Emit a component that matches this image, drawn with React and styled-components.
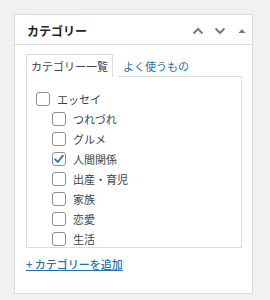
import React from "react";
import styled, { createGlobalStyle } from "styled-components";

const GlobalStyle = createGlobalStyle`
  html, body {
    margin: 0;
    padding: 0;
    background: #f1f1f1;
    font-family: "Noto Sans CJK JP", "Noto Sans", sans-serif;
  }
`;

const Page = styled.div`
  padding: 14px 0 0 14px;
`;

const Panel = styled.section`
  width: 237px;
  background: #fff;
  border: 1px solid #dcdcde;
  box-shadow: 0 1px 1px rgba(0, 0, 0, 0.04);
`;

const Header = styled.div`
  height: 30px;
  box-sizing: border-box;
  border-bottom: 1px solid #dcdcde;
  display: flex;
  align-items: center;
  padding: 2px 6px 0 12px;
  > h2 {
    margin: 0;
    flex: 1;
    font-size: 12px;
    font-weight: 700;
    color: #1d2327;
    line-height: 1;
  }
`;

const Handles = styled.div`
  display: flex;
  align-items: center;
  color: #787c82;
  > svg {
    display: block;
    margin-left: 10px;
  }
  > svg:last-child {
    margin-left: 12px;
  }
`;

const Body = styled.div`
  padding: 9px 10px 19px 11px;
`;

const TabRow = styled.div`
  display: flex;
  align-items: stretch;
  height: 23px;
`;

const Tab = styled.div`
  font-size: 11px;
  line-height: 1;
  display: flex;
  align-items: center;
  padding: ${(p) => (p.$active ? "1px 4px 0" : "1px 5px 0")};
  color: ${(p) => (p.$active ? "#3c434a" : "#2271b1")};
  border: 1px solid ${(p) => (p.$active ? "#dcdcde" : "transparent")};
  border-bottom: ${(p) => (p.$active ? "none" : "1px solid #dcdcde")};
  margin-right: ${(p) => (p.$active ? "4px" : "0")};
`;

const Filler = styled.div`
  flex: 1;
  border-bottom: 1px solid #dcdcde;
`;

const List = styled.ul`
  list-style: none;
  margin: 0;
  height: 171px;
  overflow: hidden;
  padding: 12px 0 0 9px;
  box-sizing: border-box;
  border: 1px solid #dcdcde;
  border-top: none;
`;

const Row = styled.li`
  height: 20px;
  display: flex;
  align-items: center;
  gap: 7px;
  padding-left: ${(p) => p.$depth * 16}px;
  font-size: 11px;
  color: #3c434a;
`;

const Box = styled.span`
  width: 14px;
  height: 14px;
  box-sizing: border-box;
  border: 1px solid #8c8f94;
  border-radius: 3px;
  background: #fff;
  display: flex;
  align-items: center;
  justify-content: center;
  flex-shrink: 0;
`;

const AddLink = styled.a`
  display: inline-block;
  margin-top: 8px;
  font-size: 11px;
  line-height: 16px;
  color: #2271b1;
  text-decoration: underline;
  font-weight: 500;
`;

const categories = [
  { name: "エッセイ", depth: 0 },
  { name: "つれづれ", depth: 1 },
  { name: "グルメ", depth: 1 },
  { name: "人間関係", depth: 1, checked: true },
  { name: "出産・育児", depth: 1 },
  { name: "家族", depth: 1 },
  { name: "恋愛", depth: 1 },
  { name: "生活", depth: 1 },
];

const Check = () => (
  <svg width="12" height="12" viewBox="0 0 12 12">
    <path d="M2.2 6.3 L4.8 9 L9.9 2.6" fill="none" stroke="#2271b1" strokeWidth="1.8" strokeLinecap="round" strokeLinejoin="round" />
  </svg>
);

export default function App() {
  return (
    <>
      <GlobalStyle />
      <Page>
        <Panel>
          <Header>
            <h2>カテゴリー</h2>
            <Handles>
              <svg width="12" height="8" viewBox="0 0 12 8">
                <path d="M1.5 6.5 L6 2 L10.5 6.5" fill="none" stroke="currentColor" strokeWidth="2" />
              </svg>
              <svg width="12" height="8" viewBox="0 0 12 8">
                <path d="M1.5 1.5 L6 6 L10.5 1.5" fill="none" stroke="currentColor" strokeWidth="2" />
              </svg>
              <svg width="8" height="8" viewBox="0 0 8 8">
                <path d="M0.5 6 L4 2 L7.5 6 Z" fill="currentColor" />
              </svg>
            </Handles>
          </Header>
          <Body>
            <TabRow>
              <Tab $active>カテゴリー一覧</Tab>
              <Tab>よく使うもの</Tab>
              <Filler />
            </TabRow>
            <List>
              {categories.map((c) => (
                <Row key={c.name} $depth={c.depth}>
                  <Box>{c.checked && <Check />}</Box>
                  {c.name}
                </Row>
              ))}
            </List>
            <AddLink href="#">+ カテゴリーを追加</AddLink>
          </Body>
        </Panel>
      </Page>
    </>
  );
}
